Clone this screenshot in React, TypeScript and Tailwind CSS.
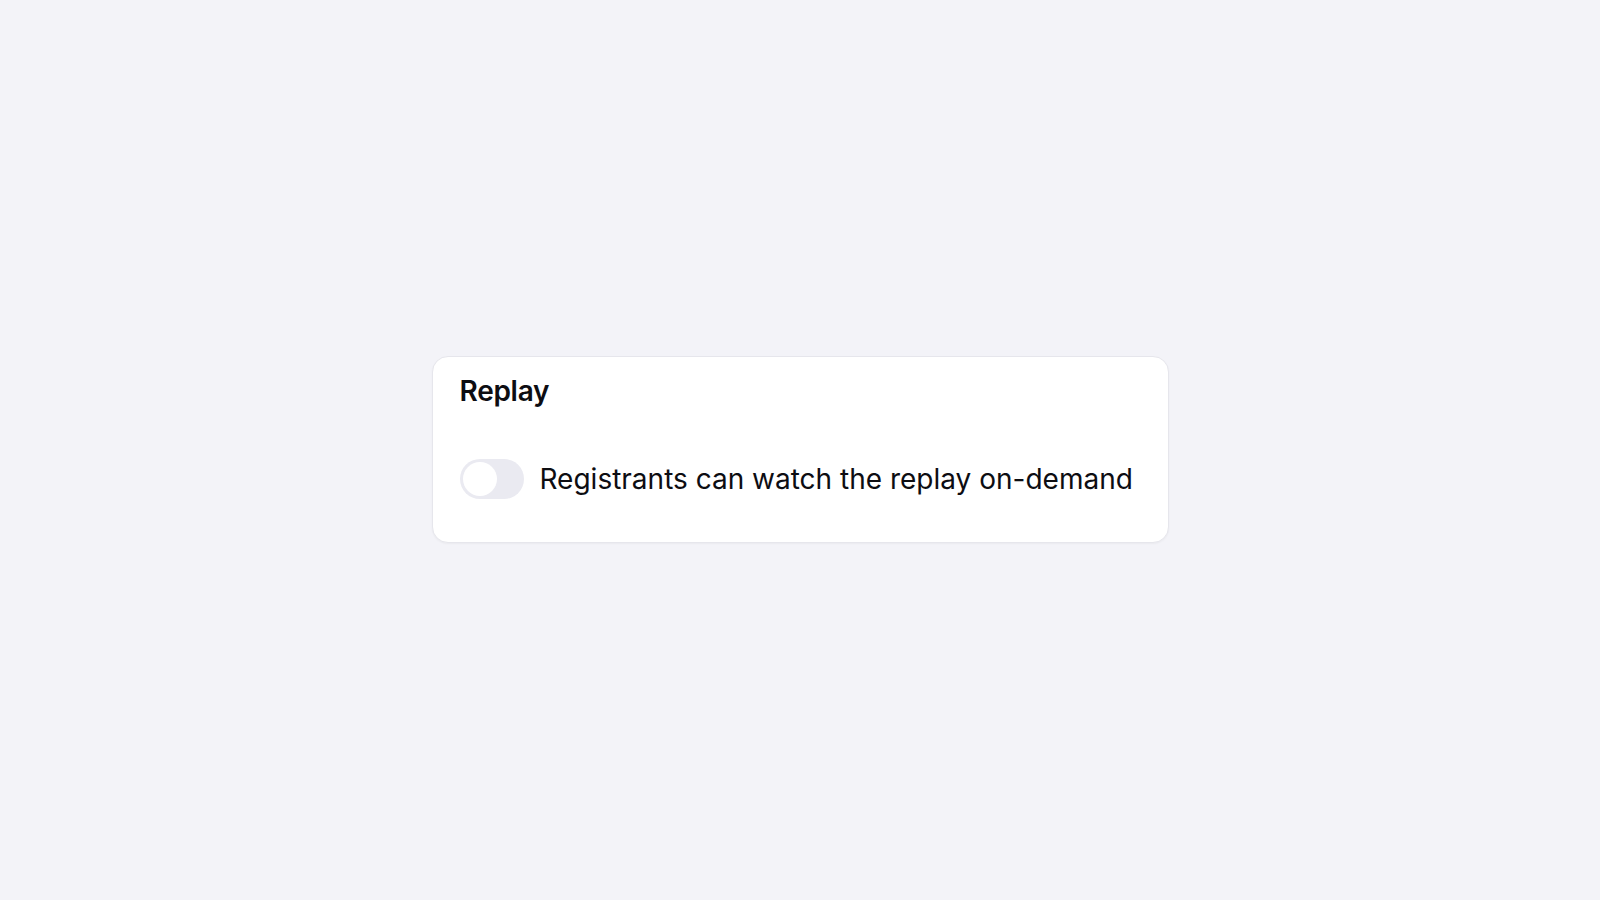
import { useState } from "react";

const App = () => {
  const [enabled, setEnabled] = useState(false);

  return (
    <div
      className="min-h-screen w-full bg-[#f3f3f8] flex items-center justify-center"
      style={{ fontFamily: "Inter, 'Noto Sans', sans-serif" }}
    >
      <div className="w-[737px] h-[187px] bg-white rounded-2xl border border-[#e6e6ec] shadow-[0_1px_2px_rgba(0,0,0,0.04)] pl-[27px] pr-7 pt-[16px] text-[#0d0d12] -mt-[2px]">
        <h2 className="text-[28px] font-semibold leading-[36px] tracking-[-0.01em]">Replay</h2>
        <div className="mt-[50px] flex items-center gap-4">
          <button
            type="button"
            onClick={() => setEnabled(!enabled)}
            className={`relative w-16 h-10 rounded-full shrink-0 transition-colors ${
              enabled ? "bg-[#6b5cff]" : "bg-[#eaeaf1]"
            }`}
          >
            <span
              className={`absolute top-[3px] left-[3px] w-[34px] h-[34px] rounded-full bg-white transition-transform ${
                enabled ? "translate-x-6" : "translate-x-0"
              }`}
            />
          </button>
          <span className="text-[28px] leading-[36px]">
            Registrants can watch the replay on-demand
          </span>
        </div>
      </div>
    </div>
  );
};

export default App;
